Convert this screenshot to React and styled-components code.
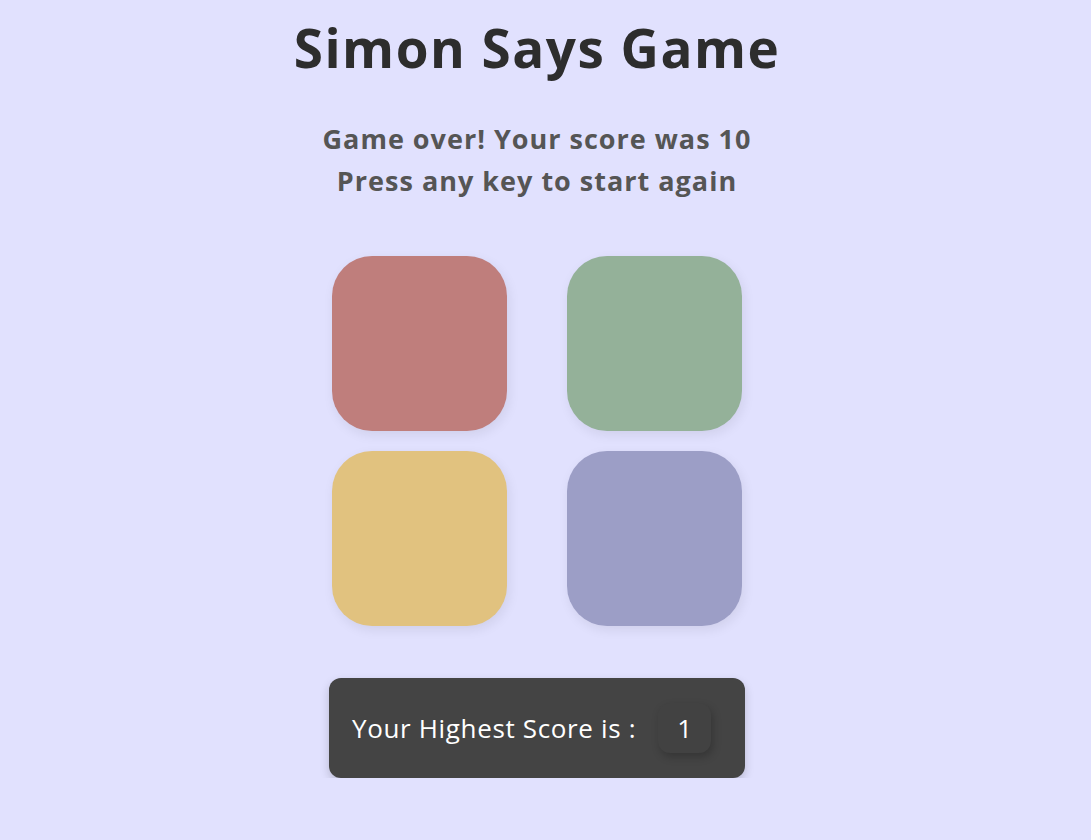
import React from 'react'
import styled, { createGlobalStyle } from 'styled-components'

const GlobalStyle = createGlobalStyle`
  html, body {
    margin: 0;
    padding: 0;
    background-color: #e1e1fe;
  }
  body {
    font-family: 'Open Sans', 'Noto Sans', sans-serif;
  }
`

const Page = styled.div`
  display: flex;
  flex-direction: column;
  align-items: center;
  padding-right: 17px;
  text-align: center;
`

const Title = styled.h1`
  margin: 12px 0 0;
  font-size: 53px;
  font-weight: 700;
  letter-spacing: 1.5px;
  line-height: 72px;
  color: #2d2d2d;
`

const Status = styled.h2`
  margin: 34px 0 0;
  font-size: 27px;
  font-weight: 700;
  letter-spacing: 1px;
  line-height: 42px;
  color: #555;
`

const Board = styled.div`
  display: grid;
  grid-template-columns: 175px 175px;
  column-gap: 60px;
  row-gap: 20px;
  margin-top: 54px;
`

const Pad = styled.div`
  width: 175px;
  height: 175px;
  border-radius: 40px;
  background-color: ${(p) => p.$color};
  box-shadow: 2px 4px 12px rgb(0 0 0 / 8%);
`

const ScoreCard = styled.div`
  display: flex;
  align-items: center;
  box-sizing: border-box;
  width: 416px;
  height: 100px;
  margin-top: 52px;
  padding: 0 23px;
  border-radius: 12px;
  background-color: #444;
  box-shadow: 0 4px 10px rgb(0 0 0 / 18%);
  color: #fff;
  font-size: 26px;
`

const Label = styled.span`
  font-weight: 400;
  letter-spacing: 0.65px;
`

const Badge = styled.span`
  display: flex;
  align-items: center;
  justify-content: center;
  width: 53px;
  height: 50px;
  margin-left: 22px;
  border-radius: 12px;
  background-color: #424242;
  box-shadow: 2px 4px 8px rgb(0 0 0 / 22%);
`

const pads = ['#bf7e7c', '#94b199', '#e1c27f', '#9c9ec6']

const App = () => {
  return (
    <>
      <GlobalStyle />
      <Page>
        <Title>Simon Says Game</Title>
        <Status>
          Game over! Your score was 10
          <br />
          Press any key to start again
        </Status>
        <Board>
          {pads.map((color) => (
            <Pad key={color} $color={color} />
          ))}
        </Board>
        <ScoreCard>
          <Label>Your Highest Score is :</Label>
          <Badge>1</Badge>
        </ScoreCard>
      </Page>
    </>
  )
}

export default App
